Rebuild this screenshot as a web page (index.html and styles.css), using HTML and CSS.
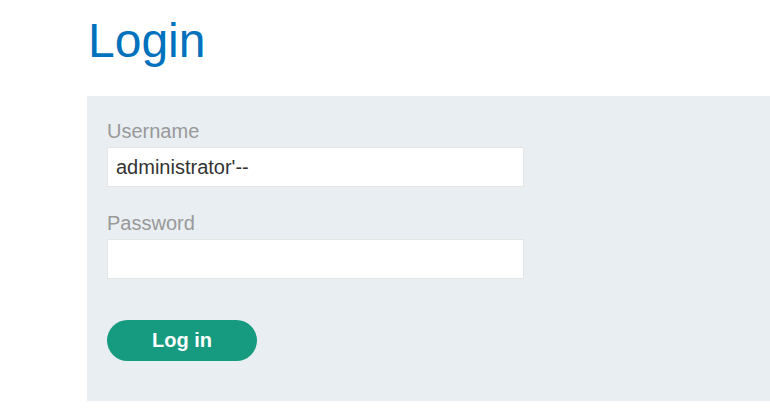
FILE: index.html
```html
<!DOCTYPE html>
<html>
<head>
<meta charset="utf-8">
<link rel="stylesheet" href="styles.css">
</head>
<body>
<main class="page">
  <h1 class="title">Login</h1>
  <section class="panel">
    <form class="login-form">
      <label class="field-label" for="username">Username</label>
      <input class="field-input" id="username" type="text" value="administrator'--">
      <label class="field-label" for="password">Password</label>
      <input class="field-input" id="password" type="password">
      <button class="btn" type="button">Log in</button>
    </form>
  </section>
</main>
</body>
</html>
```
FILE: styles.css
```css
html, body {
  margin: 0;
  padding: 0;
  background: #ffffff;
  font-family: "Liberation Sans", Arial, sans-serif;
}

.page {
  margin-left: 87px;
}

.title {
  margin: 14px 0 28px 1px;
  font-size: 48px;
  line-height: 54px;
  font-weight: normal;
  color: #0071bc;
}

.panel {
  background: #e8eef1;
  padding: 24px 20px 40px 20px;
}

.login-form {
  display: flex;
  flex-direction: column;
  align-items: flex-start;
}

.field-label {
  font-size: 20px;
  line-height: 23px;
  color: #999999;
  margin-bottom: 4px;
}

.field-input {
  box-sizing: border-box;
  width: 417px;
  height: 40px;
  margin: 0 0 25px 0;
  padding: 0 8px;
  border: 1px solid #e4e6e6;
  background: #ffffff;
  font-family: "Liberation Sans", Arial, sans-serif;
  font-size: 20px;
  color: #333333;
  outline: none;
}

.field-input + .field-label {
  margin-top: 0;
}

#password {
  margin-bottom: 41px;
}

.btn {
  box-sizing: border-box;
  width: 150px;
  height: 41px;
  border: none;
  border-radius: 21px;
  background: #169b80;
  color: #ffffff;
  font-family: "Liberation Sans", Arial, sans-serif;
  font-size: 20px;
  font-weight: bold;
  padding: 0;
}
```
